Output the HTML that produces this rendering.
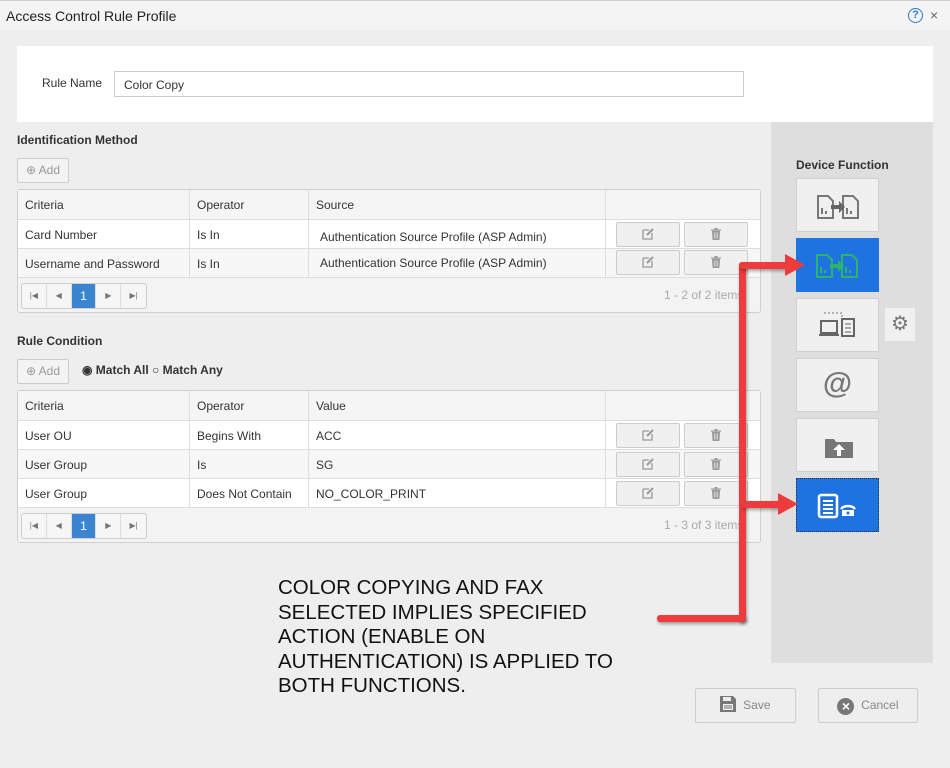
<!DOCTYPE html>
<html><head><meta charset="utf-8"><style>
*{box-sizing:border-box;margin:0;padding:0}
body{width:950px;height:768px;background:#eeeeee;font-family:"Liberation Sans",Arial,sans-serif;font-size:12px;color:#333;position:relative;overflow:hidden}
.a{position:absolute}
.title{left:0;top:0;width:950px;height:30px;background:#f4f4f4;border-top:1px solid #ccc;font-size:14px;color:#222;padding:7px 6px}
.tbl{background:#fff;border:1px solid #cfcfcf;border-radius:3px}
.row{position:absolute;left:0;width:742px;height:29px;border-bottom:1px solid #ddd}
.cell{position:absolute;top:0;height:100%;padding:8px 7px;border-right:1px solid #ddd;white-space:nowrap}
.btn{position:absolute;height:25px;background:#f0f0f0;border:1px solid #ccc;border-radius:2px;color:#999;text-align:center;font-size:12px;line-height:23px}
.pager{position:absolute;left:0;bottom:0;width:742px;height:34px;background:#f3f3f3;border-radius:0 0 3px 3px}
.pg{position:absolute;left:3px;top:5px;height:26px;width:126px;border:1px solid #ccc;border-radius:3px;background:#f6f6f6;display:flex}
.pg span{width:25px;text-align:center;line-height:24px;font-size:8px;color:#777;border-right:1px solid #ddd}
.pg span.on{background:#3b85d0;color:#fff;font-size:12px}
.tile{position:absolute;left:796px;width:83px;height:54px;background:#f0f0f0;border:1px solid #d0d0d0}
.tile.sel{background:#1f73e0;border:1px dotted #234}
.bold{font-weight:bold;font-size:12px;color:#333}
.red{position:absolute;background:#ee3b3b;box-shadow:1px 2px 3px rgba(0,0,0,.35);border-radius:3px}
.tr{display:inline-block;vertical-align:-2px}
</style></head><body>
<svg width="0" height="0" style="position:absolute"><symbol id="trash" viewBox="0 0 10 12"><path d="M0 1.5h10v1.2H0zM3.5 0h3v1.5h-3zM1 3h8l-.6 9H1.6z" fill="#999"/><path d="M3.5 4.5v6M5 4.5v6M6.5 4.5v6" stroke="#f0f0f0" stroke-width=".6"/></symbol>
<symbol id="edit" viewBox="0 0 12 12"><path d="M1 2h6M1 2v9h9V5" fill="none" stroke="#999" stroke-width="1.3"/><path d="M5 7l6-6" stroke="#999" stroke-width="2"/></symbol></svg>
<div class="a title">Access Control Rule Profile
<span class="a" style="left:908px;top:7px;width:15px;height:15px;border:1.5px solid #2a7ad0;border-radius:50%;color:#2a7ad0;font-size:11px;text-align:center;line-height:12px;font-weight:bold">?</span>
<span class="a" style="left:930px;top:6px;color:#666;font-size:14px">×</span></div>
<div class="a" style="left:17px;top:46px;width:916px;height:76px;background:#fff"></div>
<div class="a" style="left:42px;top:76px;font-size:12px">Rule Name</div>
<div class="a" style="left:114px;top:71px;width:630px;height:26px;border:1px solid #ccc;background:#fff;padding:6px 9px;font-size:12px">Color Copy</div>
<div class="a" style="left:771px;top:122px;width:162px;height:541px;background:#dedede"></div>

<div class="a bold" style="left:17px;top:133px">Identification Method</div>
<div class="btn" style="left:17px;top:158px;width:52px;background:#f3f3f3">⊕ Add</div>
<div class="a tbl" style="left:17px;top:189px;width:744px;height:124px">
 <div class="row" style="top:0;height:30px;background:#f5f5f5"><div class="cell" style="left:0;width:172px">Criteria</div><div class="cell" style="left:172px;width:119px">Operator</div><div class="cell" style="left:291px;width:297px">Source</div></div>
 <div class="row" style="top:30px"><div class="cell" style="left:0;width:172px">Card Number</div><div class="cell" style="left:172px;width:119px">Is In</div><div class="cell" style="left:291px;width:297px;padding-top:10px;padding-left:11px">Authentication Source Profile (ASP Admin)</div>
  <div class="btn" style="left:598px;top:2px;width:64px"><svg class="tr" width="12" height="12"><use href="#edit"/></svg></div><div class="btn" style="left:666px;top:2px;width:64px"><svg class="tr" width="10" height="12"><use href="#trash"/></svg></div></div>
 <div class="row" style="top:59px;background:#f7f7f7"><div class="cell" style="left:0;width:172px">Username and Password</div><div class="cell" style="left:172px;width:119px">Is In</div><div class="cell" style="left:291px;width:297px;padding-top:7px;padding-left:11px">Authentication Source Profile (ASP Admin)</div>
  <div class="btn" style="left:598px;top:1px;width:64px"><svg class="tr" width="12" height="12"><use href="#edit"/></svg></div><div class="btn" style="left:666px;top:1px;width:64px"><svg class="tr" width="10" height="12"><use href="#trash"/></svg></div></div>
 <div class="pager"><div class="pg"><span>|◀</span><span>◀</span><span class="on">1</span><span>▶</span><span style="border:0">▶|</span></div><div class="a" style="left:646px;top:10px;color:#aaa">1 - 2 of 2 items</div></div>
</div>

<div class="a bold" style="left:17px;top:334px">Rule Condition</div>
<div class="btn" style="left:17px;top:359px;width:52px;background:#f3f3f3">⊕ Add</div>
<div class="a" style="left:82px;top:363px;font-weight:bold;font-size:12px">◉ Match All ○ Match Any</div>
<div class="a tbl" style="left:17px;top:390px;width:744px;height:153px">
 <div class="row" style="top:0;height:30px;background:#f5f5f5"><div class="cell" style="left:0;width:172px">Criteria</div><div class="cell" style="left:172px;width:119px">Operator</div><div class="cell" style="left:291px;width:297px">Value</div></div>
 <div class="row" style="top:30px"><div class="cell" style="left:0;width:172px">User OU</div><div class="cell" style="left:172px;width:119px">Begins With</div><div class="cell" style="left:291px;width:297px">ACC</div>
  <div class="btn" style="left:598px;top:2px;width:64px"><svg class="tr" width="12" height="12"><use href="#edit"/></svg></div><div class="btn" style="left:666px;top:2px;width:64px"><svg class="tr" width="10" height="12"><use href="#trash"/></svg></div></div>
 <div class="row" style="top:59px;background:#f7f7f7"><div class="cell" style="left:0;width:172px">User Group</div><div class="cell" style="left:172px;width:119px">Is</div><div class="cell" style="left:291px;width:297px">SG</div>
  <div class="btn" style="left:598px;top:2px;width:64px"><svg class="tr" width="12" height="12"><use href="#edit"/></svg></div><div class="btn" style="left:666px;top:2px;width:64px"><svg class="tr" width="10" height="12"><use href="#trash"/></svg></div></div>
 <div class="row" style="top:88px"><div class="cell" style="left:0;width:172px">User Group</div><div class="cell" style="left:172px;width:119px">Does Not Contain</div><div class="cell" style="left:291px;width:297px">NO_COLOR_PRINT</div>
  <div class="btn" style="left:598px;top:2px;width:64px"><svg class="tr" width="12" height="12"><use href="#edit"/></svg></div><div class="btn" style="left:666px;top:2px;width:64px"><svg class="tr" width="10" height="12"><use href="#trash"/></svg></div></div>
 <div class="pager"><div class="pg"><span>|◀</span><span>◀</span><span class="on">1</span><span>▶</span><span style="border:0">▶|</span></div><div class="a" style="left:646px;top:10px;color:#aaa">1 - 3 of 3 items</div></div>
</div>

<div class="a bold" style="left:796px;top:158px">Device Function</div>
<div class="tile" style="top:178px"><svg width="83" height="54"><g fill="none" stroke="#777" stroke-width="2"><path d="M21 17h10l5 5v17H21z M46 17h10l5 5v17H46z"/><path d="M25 35v-6M29 35v-3M50 35v-6M54 35v-3"/></g><path d="M34 26h8v-4l6 6-6 6v-4h-8z" fill="#666"/></svg></div>
<div class="tile sel" style="top:238px;border:none"><svg width="83" height="54"><g fill="none" stroke="#2cb56a" stroke-width="2"><path d="M21 17h10l5 5v17H21z M46 17h10l5 5v17H46z"/><path d="M25 35v-6M29 35v-3M50 35v-6M54 35v-3"/></g><path d="M34 26h8v-4l6 6-6 6v-4h-8z" fill="#2cb56a"/></svg></div>
<div class="tile" style="top:298px"><svg width="83" height="54"><path d="M27 14h18v5" stroke="#777" stroke-dasharray="2 2" fill="none"/><rect x="24" y="22" width="16" height="12" fill="none" stroke="#666" stroke-width="2"/><path d="M22 36h20" stroke="#666" stroke-width="2"/><rect x="45" y="20" width="12" height="17" fill="none" stroke="#666" stroke-width="2"/><path d="M48 25h6M48 29h6M48 33h6" stroke="#666"/></svg></div>
<div class="a" style="left:885px;top:308px;width:30px;height:33px;background:#f0f0f0;color:#777;font-size:20px;text-align:center;line-height:32px">⚙</div>
<div class="tile" style="top:358px;text-align:center;font-size:30px;font-weight:bold;color:#777;line-height:50px">@</div>
<div class="tile" style="top:418px"><svg width="83" height="54"><path d="M28 20h9l2 3h17v16H28z" fill="#777"/><path d="M42 25l-6 6h4v6h4v-6h4z" fill="#fff"/></svg></div>
<div class="tile sel" style="top:478px"><svg width="83" height="54"><rect x="22" y="16" width="18" height="22" rx="2" fill="none" stroke="#fff" stroke-width="2.5"/><path d="M26 22h10M26 26h10M26 30h10M26 34h10" stroke="#fff" stroke-width="2"/><path d="M45 31h12v6H45z" fill="#fff"/><path d="M44 30c3-4 11-4 14 0" fill="none" stroke="#fff" stroke-width="2.5"/><circle cx="51" cy="34" r="1.5" fill="#1f73e0"/></svg></div>

<div class="red" style="left:739px;top:262px;width:7px;height:360px"></div>
<div class="red" style="left:657px;top:615px;width:89px;height:7px"></div>
<div class="red" style="left:739px;top:262px;width:50px;height:7px"></div>
<div class="a" style="left:785px;top:254px;width:0;height:0;border-left:20px solid #ee3b3b;border-top:11px solid transparent;border-bottom:11px solid transparent"></div>
<div class="red" style="left:742px;top:501px;width:40px;height:7px"></div>
<div class="a" style="left:778px;top:493px;width:0;height:0;border-left:20px solid #ee3b3b;border-top:11px solid transparent;border-bottom:11px solid transparent"></div>

<div class="a" style="left:278px;top:576px;font-size:20.5px;line-height:24.5px;color:#111">COLOR COPYING AND FAX<br>SELECTED IMPLIES SPECIFIED<br>ACTION (ENABLE ON<br>AUTHENTICATION) IS APPLIED TO<br>BOTH FUNCTIONS.</div>

<div class="btn" style="left:695px;top:688px;width:101px;height:35px;line-height:33px;color:#888;font-size:12px;background:#eee"><svg class="tr" width="16" height="16" viewBox="0 0 16 16" style="vertical-align:-3px"><path d="M0 0h13l3 3v13H0z" fill="#777"/><rect x="3" y="1" width="8" height="4" fill="#eee"/><rect x="3" y="8" width="10" height="6" fill="#eee"/><path d="M4 10h8M4 12h8" stroke="#777"/></svg>&nbsp; Save</div>
<div class="btn" style="left:818px;top:688px;width:100px;height:35px;line-height:33px;color:#888;font-size:12px;background:#eee"><span style="display:inline-block;width:17px;height:17px;border-radius:50%;background:#777;color:#fff;line-height:17px;font-size:14px;font-weight:bold;vertical-align:-2px">×</span>&nbsp; Cancel</div>
</body></html>
